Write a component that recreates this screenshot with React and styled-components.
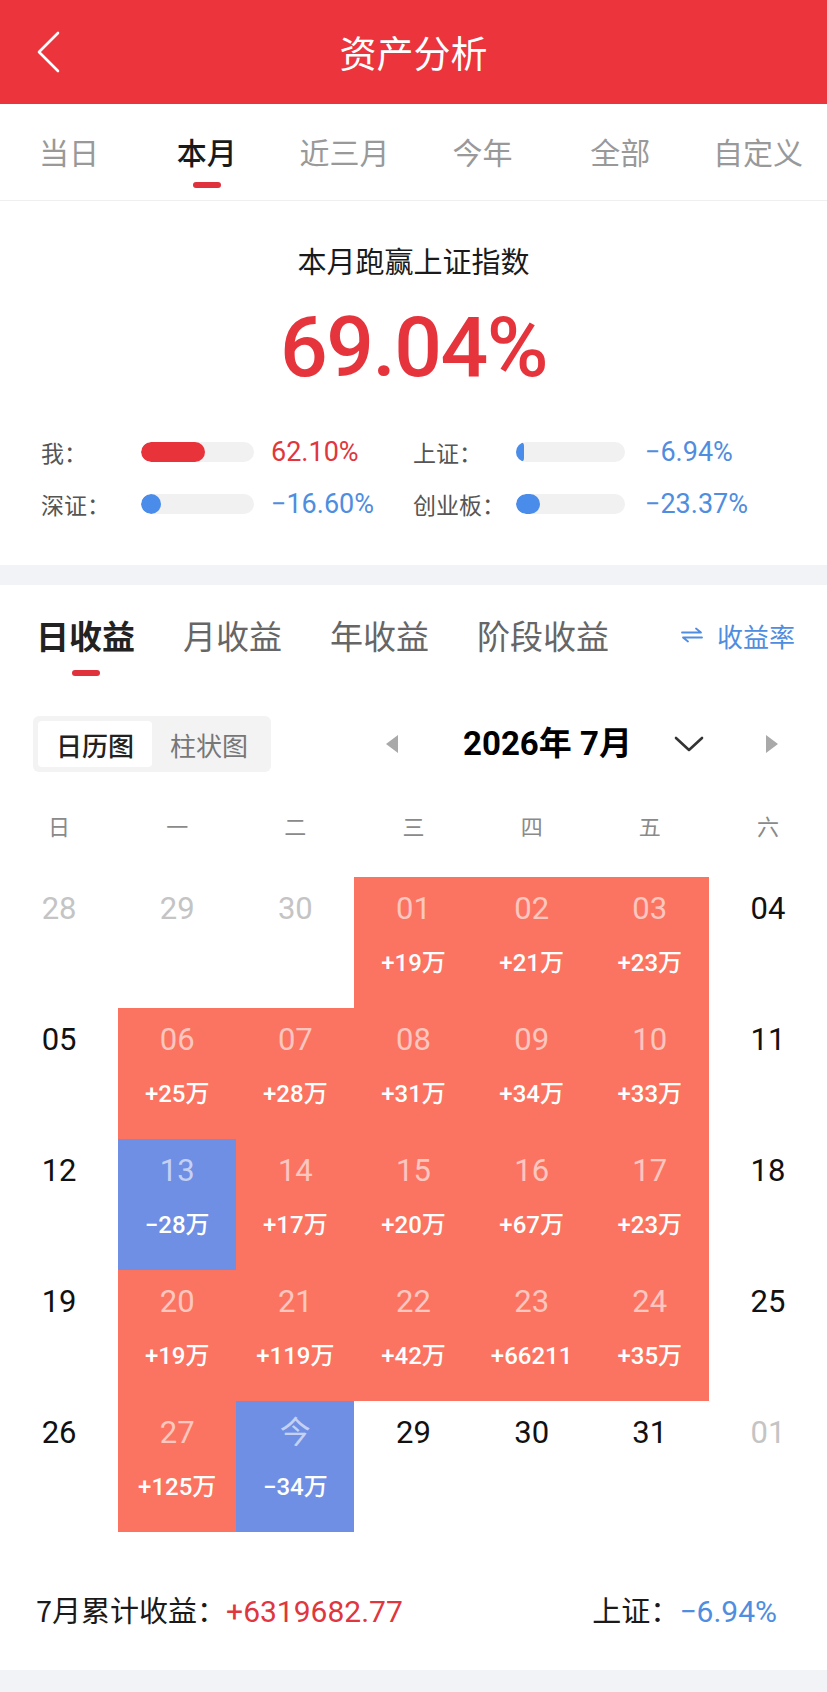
import React from "react";
import styled, { createGlobalStyle } from "styled-components";

const GlobalStyle = createGlobalStyle`
  html, body {
    margin: 0;
    padding: 0;
    background: #ffffff;
    font-family: "Noto Sans CJK SC", sans-serif;
  }
  * {
    box-sizing: border-box;
  }
`;

const RED = "#ec343d";
const UP = "#e0363e";
const DOWN = "#4f8de0";
const CELL_UP = "#fb7461";
const CELL_DOWN = "#6e8fe3";

const Page = styled.div`
  width: 827px;
  background: #ffffff;
`;

const Header = styled.header`
  height: 104px;
  background: ${RED};
  display: grid;
  grid-template-columns: 104px 1fr 104px;
  align-items: center;
`;

const BackButton = styled.button`
  width: 104px;
  height: 104px;
  border: none;
  background: transparent;
  padding: 0 0 0 36px;
  display: flex;
  align-items: center;
  cursor: pointer;
`;

const HeaderTitle = styled.h1`
  margin: 0;
  text-align: center;
  color: #ffffff;
  font-size: 37px;
  font-weight: 400;
  line-height: 1;
`;

const PeriodBar = styled.nav`
  display: flex;
  height: 97px;
  border-bottom: 1px solid #efefef;
`;

const PeriodTab = styled.div`
  flex: 1;
  display: flex;
  flex-direction: column;
  align-items: center;
  padding-top: 26px;
`;

const PeriodLabel = styled.span`
  font-size: 30px;
  line-height: 42px;
  color: ${(p) => (p.$active ? "#1a1a1a" : "#999999")};
  font-weight: ${(p) => (p.$active ? 500 : 400)};
`;

const Indicator = styled.span`
  display: block;
  width: 28px;
  height: 6px;
  border-radius: 3px;
  margin-top: ${(p) => p.$top || 10}px;
  background: ${(p) => (p.$show ? "#e0323c" : "transparent")};
`;

const Summary = styled.section`
  padding: 39px 0 43px;
  display: flex;
  flex-direction: column;
  align-items: center;
`;

const SummaryTitle = styled.div`
  font-size: 29px;
  line-height: 40px;
  color: #1a1a1a;
`;

const BigNumber = styled.div`
  margin-top: 23px;
  font-family: Roboto, sans-serif;
  font-size: 84px;
  font-weight: 500;
  letter-spacing: -1.5px;
  line-height: 90px;
  color: #e5343c;
`;

const Compare = styled.div`
  align-self: stretch;
  margin-top: 41px;
  padding-left: 41px;
  display: grid;
  grid-template-columns: 100px 113px 159px 103px 109px 1fr;
  row-gap: 16px;
  align-items: center;
`;

const CompareLabel = styled.span`
  font-size: 23px;
  line-height: 36px;
  color: #555555;
`;

const Track = styled.div`
  height: 20px;
  border-radius: 10px;
  background: #f1f1f1;
  overflow: hidden;
`;

const Fill = styled.div`
  height: 100%;
  border-radius: 10px;
  background: ${(p) => (p.$up ? "#e9333b" : "#4a8cea")};
`;

const CompareValue = styled.span`
  padding-left: ${(p) => p.$pad}px;
  font-family: Roboto, sans-serif;
  font-size: 27px;
  line-height: 36px;
  color: ${(p) => (p.$up ? UP : DOWN)};
`;

const Divider = styled.div`
  height: ${(p) => p.$h}px;
  background: #f2f3f6;
`;

const ProfitTabs = styled.div`
  display: flex;
  align-items: flex-start;
  padding: 27px 32px 0 36px;
  gap: 48px;
`;

const ProfitTab = styled.div`
  display: flex;
  flex-direction: column;
  align-items: center;
`;

const ProfitLabel = styled.span`
  font-size: 33px;
  line-height: 46px;
  color: ${(p) => (p.$active ? "#222222" : "#666666")};
  font-weight: ${(p) => (p.$active ? 700 : 400)};
`;

const RateLink = styled.div`
  margin-left: auto;
  display: flex;
  align-items: center;
  gap: 14px;
  height: 46px;
  font-size: 26px;
  color: ${DOWN};
`;

const ToolRow = styled.div`
  display: flex;
  align-items: center;
  margin-top: 40px;
  padding-left: 33px;
`;

const Segment = styled.div`
  display: flex;
  width: 238px;
  height: 56px;
  padding: 5px;
  border-radius: 6px;
  background: #f3f3f3;
`;

const SegmentItem = styled.div`
  flex: 1;
  display: flex;
  align-items: center;
  justify-content: center;
  border-radius: 4px;
  font-size: 26px;
  background: ${(p) => (p.$active ? "#ffffff" : "transparent")};
  color: ${(p) => (p.$active ? "#222222" : "#777777")};
  font-weight: ${(p) => (p.$active ? 500 : 400)};
`;

const MonthNav = styled.div`
  display: flex;
  align-items: center;
  margin-left: 100px;
`;

const NavArrow = styled.div`
  width: 42px;
  height: 40px;
  display: flex;
  align-items: center;
  justify-content: center;
  margin-left: ${(p) => p.$ml || 0}px;
`;

const MonthText = styled.div`
  width: 215px;
  margin-left: 27px;
  text-align: center;
  font-family: Roboto, "Noto Sans CJK SC", sans-serif;
  font-size: 33px;
  font-weight: 700;
  color: #000000;
  line-height: 40px;
`;

const Chevron = styled.div`
  width: 38px;
  margin-left: 15px;
  display: flex;
  justify-content: center;
`;

const WeekRow = styled.div`
  display: grid;
  grid-template-columns: repeat(7, 1fr);
  padding: 31px 0 30px;
`;

const WeekDay = styled.div`
  text-align: center;
  font-size: 22px;
  line-height: 44px;
  color: #8a8a8a;
`;

const CalendarGrid = styled.div`
  display: grid;
  grid-template-columns: repeat(7, 1fr);
  grid-auto-rows: 131px;
`;

const DayCell = styled.div`
  display: flex;
  flex-direction: column;
  align-items: center;
  padding-top: 12px;
  background: ${(p) =>
    p.$kind === "up" ? CELL_UP : p.$kind === "down" ? CELL_DOWN : "transparent"};
`;

const DayNumber = styled.span`
  font-family: Roboto, "Noto Sans CJK SC", sans-serif;
  font-size: 31px;
  line-height: 40px;
  color: ${(p) =>
    p.$kind === "up" || p.$kind === "down"
      ? "rgba(255, 255, 255, 0.6)"
      : p.$kind === "other"
      ? "#c4c4c4"
      : "#111111"};
`;

const DayAmount = styled.span`
  margin-top: 19px;
  font-family: Roboto, "Noto Sans CJK SC", sans-serif;
  font-size: 24px;
  font-weight: 500;
  line-height: 30px;
  color: #ffffff;
`;

const Footer = styled.div`
  display: flex;
  align-items: center;
  justify-content: space-between;
  padding: 57px 50px 38px 36px;
  font-size: 29px;
  line-height: 40px;
  color: #1a1a1a;
`;

const FooterValue = styled.span`
  font-family: Roboto, sans-serif;
  font-size: 30px;
  color: ${(p) => (p.$up ? UP : DOWN)};
`;

const periods = ["当日", "本月", "近三月", "今年", "全部", "自定义"];
const profitTabs = ["日收益", "月收益", "年收益", "阶段收益"];
const weekDays = ["日", "一", "二", "三", "四", "五", "六"];

const compareRows = [
  [
    { label: "我：", width: 64, value: "62.10%", up: true },
    { label: "上证：", width: 8, value: "−6.94%", up: false },
  ],
  [
    { label: "深证：", width: 20, value: "−16.60%", up: false },
    { label: "创业板：", width: 24, value: "−23.37%", up: false },
  ],
];

const days = [
  { d: "28", k: "other" },
  { d: "29", k: "other" },
  { d: "30", k: "other" },
  { d: "01", k: "up", a: "+19万" },
  { d: "02", k: "up", a: "+21万" },
  { d: "03", k: "up", a: "+23万" },
  { d: "04" },
  { d: "05" },
  { d: "06", k: "up", a: "+25万" },
  { d: "07", k: "up", a: "+28万" },
  { d: "08", k: "up", a: "+31万" },
  { d: "09", k: "up", a: "+34万" },
  { d: "10", k: "up", a: "+33万" },
  { d: "11" },
  { d: "12" },
  { d: "13", k: "down", a: "−28万" },
  { d: "14", k: "up", a: "+17万" },
  { d: "15", k: "up", a: "+20万" },
  { d: "16", k: "up", a: "+67万" },
  { d: "17", k: "up", a: "+23万" },
  { d: "18" },
  { d: "19" },
  { d: "20", k: "up", a: "+19万" },
  { d: "21", k: "up", a: "+119万" },
  { d: "22", k: "up", a: "+42万" },
  { d: "23", k: "up", a: "+66211" },
  { d: "24", k: "up", a: "+35万" },
  { d: "25" },
  { d: "26" },
  { d: "27", k: "up", a: "+125万" },
  { d: "今", k: "down", a: "−34万" },
  { d: "29" },
  { d: "30" },
  { d: "31" },
  { d: "01", k: "other" },
];

const App = () => {
  return (
    <Page>
      <GlobalStyle />
      <Header>
        <BackButton>
          <svg width="26" height="42" viewBox="0 0 26 42">
            <path d="M22 2 L3 21 L22 40" fill="none" stroke="#ffffff" strokeWidth="2.6" strokeLinecap="round" strokeLinejoin="round" />
          </svg>
        </BackButton>
        <HeaderTitle>资产分析</HeaderTitle>
        <div />
      </Header>

      <PeriodBar>
        {periods.map((p) => (
          <PeriodTab key={p}>
            <PeriodLabel $active={p === "本月"}>{p}</PeriodLabel>
            <Indicator $show={p === "本月"} />
          </PeriodTab>
        ))}
      </PeriodBar>

      <Summary>
        <SummaryTitle>本月跑赢上证指数</SummaryTitle>
        <BigNumber>69.04%</BigNumber>
        <Compare>
          {compareRows.map((row) =>
            row.map((c, i) => (
              <React.Fragment key={c.label}>
                <CompareLabel>{c.label}</CompareLabel>
                <Track>
                  <Fill $up={c.up} style={{ width: c.width }} />
                </Track>
                <CompareValue $up={c.up} $pad={i === 0 ? 17 : 20}>
                  {c.value}
                </CompareValue>
              </React.Fragment>
            ))
          )}
        </Compare>
      </Summary>

      <Divider $h={20} />

      <ProfitTabs>
        {profitTabs.map((t) => (
          <ProfitTab key={t}>
            <ProfitLabel $active={t === "日收益"}>{t}</ProfitLabel>
            <Indicator $show={t === "日收益"} $top={12} />
          </ProfitTab>
        ))}
        <RateLink>
          <svg width="22" height="16" viewBox="0 0 22 16">
            <path d="M1 5.5 H20 L15 1.5" fill="none" stroke={DOWN} strokeWidth="1.8" strokeLinecap="round" strokeLinejoin="round" />
            <path d="M21 10.5 H2 L7 14.5" fill="none" stroke={DOWN} strokeWidth="1.8" strokeLinecap="round" strokeLinejoin="round" />
          </svg>
          <span>收益率</span>
        </RateLink>
      </ProfitTabs>

      <ToolRow>
        <Segment>
          <SegmentItem $active>日历图</SegmentItem>
          <SegmentItem>柱状图</SegmentItem>
        </Segment>
        <MonthNav>
          <NavArrow>
            <svg width="14" height="18" viewBox="0 0 14 18">
              <path d="M13 0 L13 18 L1 9 Z" fill="#a9a9a9" />
            </svg>
          </NavArrow>
          <MonthText>2026年 7月</MonthText>
          <Chevron>
            <svg width="30" height="16" viewBox="0 0 30 16">
              <path d="M2 2 L15 14 L28 2" fill="none" stroke="#333333" strokeWidth="2.6" strokeLinecap="round" strokeLinejoin="round" />
            </svg>
          </Chevron>
          <NavArrow $ml={43}>
            <svg width="14" height="18" viewBox="0 0 14 18">
              <path d="M1 0 L1 18 L13 9 Z" fill="#a9a9a9" />
            </svg>
          </NavArrow>
        </MonthNav>
      </ToolRow>

      <WeekRow>
        {weekDays.map((w) => (
          <WeekDay key={w}>{w}</WeekDay>
        ))}
      </WeekRow>

      <CalendarGrid>
        {days.map((day, i) => (
          <DayCell key={i} $kind={day.k}>
            <DayNumber $kind={day.k}>{day.d}</DayNumber>
            {day.a && <DayAmount>{day.a}</DayAmount>}
          </DayCell>
        ))}
      </CalendarGrid>

      <Footer>
        <span>
          7月累计收益：<FooterValue $up>+6319682.77</FooterValue>
        </span>
        <span>
          上证：<FooterValue>−6.94%</FooterValue>
        </span>
      </Footer>

      <Divider $h={24} />
    </Page>
  );
};

export default App;
